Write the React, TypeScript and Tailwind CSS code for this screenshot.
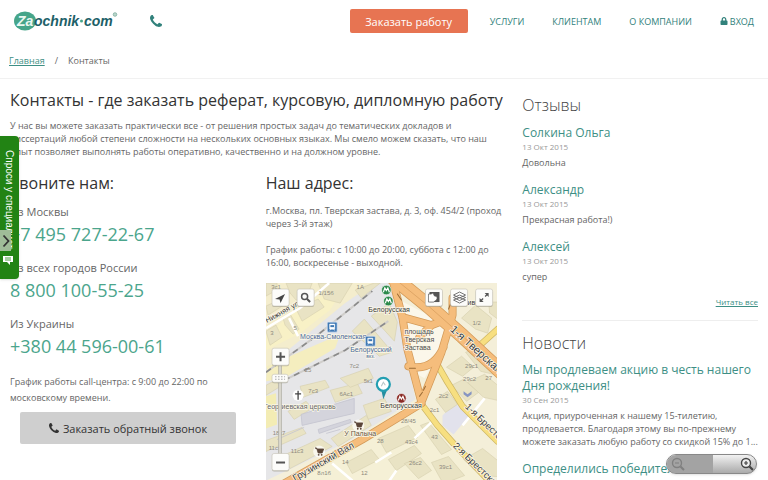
import React from "react";
import { FaLock } from "react-icons/fa";

const phones = [
  { place: "Из Москвы", number: "+7 495 727-22-67" },
  { place: "Из всех городов России", number: "8 800 100-55-25" },
  { place: "Из Украины", number: "+380 44 596-00-61" },
];

const reviews = [
  { name: "Солкина Ольга", date: "13 Окт 2015", text: "Довольна" },
  { name: "Александр", date: "13 Окт 2015", text: "Прекрасная работа!)" },
  { name: "Алексей", date: "13 Окт 2015", text: "супер" },
];

function Logo() {
  return (
    <svg width="104" height="24" viewBox="0 0 104 24" role="img" aria-label="Zaochnik.com">
      <ellipse cx="11" cy="12" rx="11" ry="9.5" fill="#46a58a" />
      <text x="3" y="16.5" fontSize="14" fontStyle="italic" fontWeight="700" fill="#e9f7f1" fontFamily="Liberation Sans, sans-serif">Za</text>
      <text x="20" y="16.5" fontSize="14" fontStyle="italic" fontWeight="700" fill="#1d5f68" fontFamily="Liberation Sans, sans-serif">ochnik</text>
      <circle cx="67.5" cy="12" r="1.5" fill="#46a58a" />
      <text x="70" y="16.5" fontSize="14" fontStyle="italic" fontWeight="700" fill="#1d5f68" fontFamily="Liberation Sans, sans-serif">com</text>
      <circle cx="101" cy="5.5" r="1.8" fill="#b9d5cb" stroke="#7fae9f" strokeWidth="0.8" />
    </svg>
  );
}

function Handset({ className }: { className: string }) {
  return (
    <svg className={className} viewBox="0 128 1408 1408" fill="currentColor" aria-hidden="true">
      <path d="M1408 1240q0 27-10 70.5t-21 68.5q-21 50-122 106-94 51-186 51-27 0-53-3.5t-57-12.5-47-14.5-55.5-20.500-49-18q-98-35-175-83-127-79-264-216t-216-264q-48-77-83-175-3-9-18-49t-20.500-55.500-14.500-47-12.500-57-3.500-53q0-92 51-186 56-101 106-122 25-11 68.500-21t70.500-10q14 0 21 3 18 6 53 76 11 19 30 54t35 63.500 31 53.500q3 4 17.500 25t21.500 35.500 7 28.500q0 20-28.500 50t-62 55-62 53-28.500 46q0 9 5 22.500t8.500 20.500 14 24 11.500 19q76 137 174 235t235 174q2 1 19 11.500t24 14 20.500 8.500 22.500 5q18 0 46-28.500t53-62 55-62 50-28.500q14 0 28.500 7t35.500 21.500 25 17.500q25 15 53.500 31t63.500 35 54 30q70 35 76 53 3 7 3 21z" />
    </svg>
  );
}

const buildings = [
  "266,283 277,283 277,290 266,296", "286,283 312,283 308,294 296,300 290,293", "318,283 352,283 340,303 324,299",
  "266,306 283,298 287,303 268,315", "283,318 290,314 299,329 293,334 285,325", "296,309 318,299 324,307 302,321",
  "266,331 276,325 282,337 270,345", "355,290 374,283 380,283 361,298", "352,331 364,319 392,352 379,356",
  "371,316 389,303 397,322 394,341 384,330", "266,385 277,379 279,387 266,395", "300,386 325,380 329,387 303,397",
  "330,390 357,383 362,393 335,402", "340,378 368,368 373,378 350,387", "288,411 306,401 312,408 294,419",
  "266,440 302,427 306,433 266,451", "283,455 320,438 332,446 290,468", "363,405 384,398 391,411 368,419",
  "331,438 366,415 371,425 338,446", "378,438 408,425 417,437 386,452", "346,462 371,449 379,459 352,473",
  "388,459 414,445 421,453 396,470", "420,425 428,422 451,449 441,454", "435,399 447,391 457,404 445,412",
  "451,385 463,379 478,392 466,401", "467,382 484,374 497,385 497,400 483,397", "463,459 482,448 497,460 497,476 480,475",
  "431,462 448,456 464,475 451,480 441,480", "461,318 475,305 491,318 487,333 475,329", "488,302 497,302 497,319 489,313",
  "446,367 461,356 473,367 462,376", "465,352 478,348 497,363 497,375 480,371", "404,463 420,457 431,470 418,478",
];

const numbers: [number, number, string][] = [
  [276, 289, "3с1"], [326, 295, "1/15б"], [360, 289, "1А"], [272, 335, "3"], [295, 330, "5"], [308, 372, "25"],
  [354, 368, "7с2"], [313, 393, "7с3"], [346, 396, "6Ас1"], [368, 383, "5к1"], [279, 435, "18к7"], [297, 453, "11с3"],
  [345, 463, "14"], [324, 474, "8л1б"], [364, 474, "12"], [443, 398, "2с2"], [434, 412, "2с1"], [408, 423, "28/45"],
  [434, 439, "43"], [411, 444, "43с4"], [415, 464, "26с2"], [445, 468, "39с1"], [476, 325, "1/2"],
  [471, 368, "29с1"], [469, 381, "29с2"], [488, 380, "27"], [380, 443, "28"], [275, 450, "11с6"],
];

function MetroSign({ x, y, color }: { x: number; y: number; color: string }) {
  return (
    <g>
      <circle cx={x} cy={y} r="4.8" fill={color} stroke="#fff" strokeWidth="0.6" />
      <path d={`M${x - 3} ${y + 2.2}l1.5-4.2 1.5 2.6 1.5-2.6 1.5 4.2`} fill="none" stroke="#fff" strokeWidth="1.2" />
    </g>
  );
}

function TrainSign({ x, y }: { x: number; y: number }) {
  return (
    <g>
      <rect x={x - 5} y={y - 5} width="10" height="10" rx="1" fill="#3e78b4" stroke="#dfe9f5" strokeWidth="0.8" />
      <path d={`M${x - 2.5} ${y - 3}h5v5h-5zM${x - 2.5} ${y + 3.5}l1-1.5M${x + 2.5} ${y + 3.5}l-1-1.5`} fill="#fff" stroke="#fff" strokeWidth="0.6" />
      <path d={`M${x - 1.8} ${y - 2}h3.6v2h-3.6z`} fill="#3e78b4" />
    </g>
  );
}

function Cart({ x, y }: { x: number; y: number }) {
  return (
    <g>
      <circle cx={x} cy={y} r="6" fill="#fff" opacity="0.7" />
      <path d={`M${x - 4} ${y - 3.5}h1.5l1.5 5h4l1.5-4h-6.5z`} fill="#5a4538" stroke="#5a4538" strokeWidth="0.8" />
      <circle cx={x - 0.5} cy={y + 3.3} r="0.9" fill="#5a4538" />
      <circle cx={x + 2.5} cy={y + 3.3} r="0.9" fill="#5a4538" />
    </g>
  );
}

function MapKey({ x, y, w = 17, h = 17, children }: { x: number; y: number; w?: number; h?: number; children?: React.ReactNode }) {
  return (
    <g>
      <rect x={x} y={y + 1} width={w} height={h} rx="2" fill="#8b8776" opacity="0.5" />
      <rect x={x} y={y} width={w} height={h} rx="2" fill="#fcfcfa" stroke="#c5c2b5" strokeWidth="0.6" />
      {children}
    </g>
  );
}

const orangeRoads = "M275 488L362 439 421 403M393 283L402 317 407 349 421 402M452 298V315L441 352 421 402M402 317L431 325 447 319M408 366Q432 372 443 347M419 337L431 325";
const yellowRoads = "M497 329L475 349M436 363L447 382 462 406 497 441M422 405L437 425 453 443 490 482";
const avenue = "M386 272L428 306 462 336 502 373";

function CityMap() {
  return (
    <svg className="block w-full" viewBox="266 283 231 230" preserveAspectRatio="xMidYMin slice" fontFamily="Liberation Sans, sans-serif" role="img" aria-label="Карта проезда">
      <rect x="266" y="283" width="231" height="230" fill="#f4efd9" />
      <path d="M266 283H380L300 350 266 372z" fill="#f4edcd" />
      <path d="M308 300L342 290 330 310 300 333 266 350V335z" fill="#f8f1c6" />
      <path d="M266 368L345 303 374 283H397L404 345 415 399 350 440 266 480z" fill="#e6e6e8" />
      <path d="M267 366L340 334 335 348 284 378 266 381z" fill="#f5eebf" />
      <path d="M266 396L276 393 277 424 266 428z" fill="#f3ecb4" />
      <path d="M386 420L422 404 453 443 482 480 490 513H266V497z" fill="#f5f0d6" />
      <path d="M442 415L455 402 468 416 453 434 442 425z" fill="#e2e2ec" />
      <path d="M399 300L447 325 441 350 424 378 415 373 404 335z" fill="#fbf7ea" />
      <g fill="#e9e3c4" stroke="#d6cfae" strokeWidth="0.6">
        {buildings.map((points) => (
          <polygon key={points} points={points} />
        ))}
      </g>
      <path d="M301 414L354 398V413L302 425zM318 429L350 419 351 422 319 433zM277 439L304 427M326 433L340 429" fill="#d4d4dc" stroke="#c4c4d0" strokeWidth="0.8" />
      <path d="M266 328L300 308 329 283M289 318L298 336M332 463L352 480M396 470L378 496M432 421L414 438M484 398L462 425M391 452L375 462" fill="none" stroke="#fff" strokeWidth="2.5" />
      <path d="M266 372L316 336 372 291M284 380L345 350 388 321" fill="none" stroke="#d0cecb" strokeWidth="2" />
      <path d="M266 372L316 336 372 291M284 380L345 350 388 321" fill="none" stroke="#8a8a8a" strokeWidth="1.6" strokeDasharray="6 5" />
      <g fill="none" strokeLinejoin="round" strokeLinecap="round">
        <path d={yellowRoads} stroke="#cfb765" strokeWidth="6.5" />
        <path d={yellowRoads} stroke="#f7df80" strokeWidth="5" />
        <path d={orangeRoads} stroke="#d39a58" strokeWidth="8" />
        <path d={avenue} stroke="#d39a58" strokeWidth="15" />
        <path d={orangeRoads} stroke="#f5bd7c" strokeWidth="6.5" />
        <path d={avenue} stroke="#f5bd7c" strokeWidth="13.5" />
        <path d={avenue} stroke="#dda363" strokeWidth="0.9" />
        <path d="M397 294L401 300M409 368h6M450 304l-2 5M419 396l3-4M423 390l2-4" stroke="#9b6b35" strokeWidth="1" />
      </g>
      <g fontSize="6" fill="#8d897d" textAnchor="middle">
        {numbers.map(([x, y, label]) => (
          <text key={`${x}-${y}`} x={x} y={y}>{label}</text>
        ))}
      </g>
      <g fontSize="7" fill="#3c3c3c" stroke="#fbf7e8" strokeWidth="1.5" paintOrder="stroke">
        <text x="368" y="312">Белорусская</text>
        <text x="380" y="408">Белорусская</text>
        <text x="467" y="305">ивс</text>
        <text x="264" y="409" fill="#666">Георгиевская церковь</text>
        <text x="344" y="436" fill="#65533f">У Палыча</text>
        <g fill="#4a6a9c">
          <text x="300" y="339">Москва-Смоленская</text>
          <text x="350" y="352">Белорусский</text>
          <text x="366" y="358" fontSize="5">вкз.</text>
        </g>
        <g fill="#4d4d4d">
          <text x="404" y="334">площадь</text>
          <text x="404" y="342">Тверская</text>
          <text x="404" y="350">Застава</text>
        </g>
        <text transform="translate(267 323) rotate(-29)" fontSize="7.5">Нижняя ул.</text>
        <text transform="translate(295 481) rotate(-30)" fontSize="9.5">Грузинский Вал</text>
        <text transform="translate(449 330) rotate(42)" fontSize="11">1-я Тверская</text>
        <text transform="translate(464 407) rotate(44)" fontSize="9.5">1-я Брестская</text>
        <text transform="translate(452 446) rotate(44)" fontSize="9.5">2-я Брестская</text>
      </g>
      <MetroSign x={386} y={290} color="#2c8a4b" />
      <MetroSign x={388} y={301} color="#2c8a4b" />
      <MetroSign x={401} y={398} color="#8a2a24" />
      <TrainSign x={332} y={327} />
      <TrainSign x={370} y={341} />
      <circle cx="298" cy="395" r="5.5" fill="#fff" />
      <path d="M298 390.500v9M295 393.500h6" stroke="#444" strokeWidth="1.3" />
      <Cart x={358} y={425} />
      <Cart x={319} y={451} />
      <path d="M463 391l4 3 4-3v3l-4 3-4-3z" fill="#8795c2" />
      <path d="M381 390l2 9 4-10z" fill="#258ea0" />
      <circle cx="383" cy="384" r="6.5" fill="#fff" stroke="#249fb2" strokeWidth="2.2" />
      <path d="M381 386l2-4 2 3" fill="none" stroke="#b5c5c7" strokeWidth="1" />
      <rect x="278.5" y="362" width="3" height="93" fill="#d8d6cd" stroke="#aaa89d" strokeWidth="0.6" />
      <MapKey x={272} y={289}><path d="M275 299l10-5-4.500 9-1-3.500z" fill="#444" /></MapKey>
      <MapKey x={297} y={289}>
        <circle cx="304.5" cy="296.5" r="3" fill="none" stroke="#555" strokeWidth="1.5" />
        <path d="M307 299l3 3" stroke="#555" strokeWidth="2" />
      </MapKey>
      <MapKey x={272} y={348}><path d="M280.500 352v9M276 356.500h9" stroke="#555" strokeWidth="2" /></MapKey>
      <MapKey x={272} y={374} w={16} h={8}><path d="M275 376.500h10M275 379h10" stroke="#aaa" strokeDasharray="1.5 1.5" /></MapKey>
      <MapKey x={272} y={453}><path d="M276 462h9" stroke="#555" strokeWidth="2" /></MapKey>
      <MapKey x={425} y={289}>
        <path d="M429 292h10v10h-10z" fill="#555" />
        <path d="M428 294h3q1-2 2 0l1 2q4 0 2 4l-3 2h-5z" fill="#fff" stroke="#555" strokeWidth="0.7" />
      </MapKey>
      <MapKey x={450} y={289}>
        <path d="M453 300l6-2.500 6 2.500-6 3zM453 297.500l6-2.500 6 2.500-6 3zM453 295l6-3 6 3-6 3z" fill="#fff" stroke="#666" strokeWidth="0.9" />
      </MapKey>
      <MapKey x={475} y={289}>
        <path d="M479 302v-4l4 4zM488 293v4l-4-4z" fill="#555" />
        <path d="M480 301l2.500-2.500M484.500 296.500l2.500-2.500" stroke="#555" strokeWidth="1.3" />
      </MapKey>
    </svg>
  );
}

function Entry({ title, date, text }: { title: string; date?: string; text?: string }) {
  return (
    <article>
      <h3 className="text-xs leading-4 text-[#3d8f85]"><a href="#entry">{title}</a></h3>
      {date && <p className="text-[8px] leading-3 text-[#999]">{date}</p>}
      {text && <p className="mt-[3px] text-[9px] leading-[13px]">{text}</p>}
    </article>
  );
}

export default function App() {
  return (
    <div className="relative h-screen overflow-hidden bg-white font-['Open_Sans','Noto_Sans',sans-serif] text-[9px] leading-[13px] text-[#666]">
      <header className="border-b border-[#f1f1f1]">
        <div className="flex h-[42px] items-center justify-between px-[14px]">
          <div className="flex items-center gap-8">
            <a href="#home"><Logo /></a>
            <a href="#call" aria-label="Позвонить"><Handset className="size-3 text-[#31817b]" /></a>
          </div>
          <nav className="flex items-center text-[9px] text-[#31817b]">
            <button className="mr-[22px] h-6 w-[118px] rounded-xs bg-[#e77452] text-[11px] text-white">Заказать работу</button>
            <a className="mr-7" href="#services">УСЛУГИ</a>
            <a className="mr-7" href="#clients">КЛИЕНТАМ</a>
            <a className="mr-7" href="#about">О КОМПАНИИ</a>
            <a className="flex items-center gap-[2px]" href="#login"><FaLock className="size-2" />ВХОД</a>
          </nav>
        </div>
        <div className="flex h-9 items-center gap-[10px] pl-[9px]">
          <a className="text-[#3d8f85] underline" href="#home">Главная</a>
          <span>/</span>
          <span>Контакты</span>
        </div>
      </header>

      <div className="grid grid-cols-[minmax(0,2fr)_minmax(0,1fr)] pl-[10px]">
        <main className="pt-[11px]">
          <h1 className="text-base leading-5 text-[#333]">Контакты - где заказать реферат, курсовую, дипломную работу</h1>
          <p className="mt-[9px] pr-4">
            У нас вы можете заказать практически все - от решения простых задач до тематических докладов и диссертаций любой степени сложности на нескольких основных языках. Мы смело можем сказать, что наш опыт позволяет выполнять работы оперативно, качественно и на должном уровне.
          </p>
          <div className="mt-[15px] grid grid-cols-2 gap-[6px]">
            <section>
              <h2 className="text-base leading-5 text-[#333]">Звоните нам:</h2>
              <dl className="mt-3 flex flex-col gap-[15px]">
                {phones.map((p) => (
                  <div key={p.number}>
                    <dt className="text-[11px] leading-[14px]">{p.place}</dt>
                    <dd className="mt-[3px] text-lg leading-6 text-[#4ba58c]">{p.number}</dd>
                  </div>
                ))}
              </dl>
              <p className="mt-4 pr-12 leading-4">График работы call-центра: с 9:00 до 22:00 по московскому времени.</p>
              <button className="mt-[6px] ml-[10px] flex h-8 w-[216px] items-center justify-center gap-1 rounded-xs bg-[#cfcfcf] text-[11px] text-[#333]">
                <Handset className="size-[10px]" />
                Заказать обратный звонок
              </button>
            </section>
            <section>
              <h2 className="text-base leading-5 text-[#333]">Наш адрес:</h2>
              <p className="mt-[11px] pr-2">г.Москва, пл. Тверская застава, д. 3, оф. 454/2 (проход через 3-й этаж)</p>
              <p className="mt-[13px] pr-2">График работы: с 10:00 до 20:00, суббота с 12:00 до 16:00, воскресенье - выходной.</p>
              <div className="mt-[14px] mr-[18px]"><CityMap /></div>
            </section>
          </div>
        </main>

        <aside className="pt-4 pr-[10px] pl-[7px]">
          <h2 className="text-base leading-5 font-light text-[#444]">Отзывы</h2>
          <div className="mt-[10px] flex flex-col gap-[13px]">
            {reviews.map((r) => (
              <Entry key={r.name} title={r.name} date={r.date} text={r.text} />
            ))}
          </div>
          <p className="mt-3 border-b border-[#eee] pb-3 text-right text-[8px] text-[#3d8f85]"><a className="underline" href="#reviews">Читать все</a></p>
          <h2 className="mt-3 text-base leading-5 font-light text-[#444]">Новости</h2>
          <div className="mt-[9px] flex flex-col gap-[13px]">
            <Entry title="Мы продлеваем акцию в честь нашего Дня рождения!" date="30 Сен 2015" text="Акция, приуроченная к нашему 15-тилетию, продлевается. Благодаря этому вы по-прежнему можете заказать любую работу со скидкой 15% до 1..." />
            <Entry title="Определились победители" />
          </div>
        </aside>
      </div>

      <button className="absolute top-[136px] left-0 h-[143px] w-[19px] overflow-hidden rounded-r-sm bg-[#228314] text-white shadow-sm">
        <span className="absolute top-[14px] left-[2px] h-[100px] overflow-hidden font-['Liberation_Sans',sans-serif] text-[10px] leading-[14px] whitespace-nowrap [writing-mode:vertical-rl]">Спроси у специалиста</span>
        <span className="absolute top-[94px] left-0 flex h-[21px] w-[11px] items-center justify-center bg-[#9fbc98]">
          <svg width="8" height="14" viewBox="0 0 8 14" aria-hidden="true"><path d="M1.500 1.500L6.500 7 1.500 12.500" fill="none" stroke="#333" strokeWidth="1.8" /></svg>
        </span>
        <svg className="absolute top-[119px] left-[3px]" width="10" height="10" viewBox="0 0 10 10" aria-hidden="true"><path d="M0 1h10v6H7v3L4 7H0z" fill="#fff" /><path d="M2 3h6M2 5h6" stroke="#228314" strokeWidth="0.8" /></svg>
      </button>

      <div className="absolute right-[11px] bottom-[6px] flex h-5 w-[91px] overflow-hidden rounded-full border border-[#888] bg-linear-to-b from-[#f2f2f2] to-[#aaa] shadow-sm">
        <button className="flex flex-1 items-center bg-[#a3a3a3] pl-1" aria-label="Уменьшить">
          <svg width="14" height="14" viewBox="0 0 14 14" aria-hidden="true"><circle cx="6" cy="6" r="4.5" fill="none" stroke="#808080" strokeWidth="1.4" /><path d="M9.500 9.500L13 13" stroke="#808080" strokeWidth="2.2" /><path d="M4 6h4" stroke="#808080" strokeWidth="1.2" /></svg>
        </button>
        <button className="flex flex-1 items-center justify-end pr-[2px]" aria-label="Увеличить">
          <svg width="14" height="14" viewBox="0 0 14 14" aria-hidden="true"><circle cx="6" cy="6" r="4.5" fill="#eee" stroke="#444" strokeWidth="1.4" /><path d="M9.500 9.500L13 13" stroke="#444" strokeWidth="2.2" /><path d="M4 6h4M6 4v4" stroke="#444" strokeWidth="1.2" /></svg>
        </button>
      </div>
    </div>
  );
}
